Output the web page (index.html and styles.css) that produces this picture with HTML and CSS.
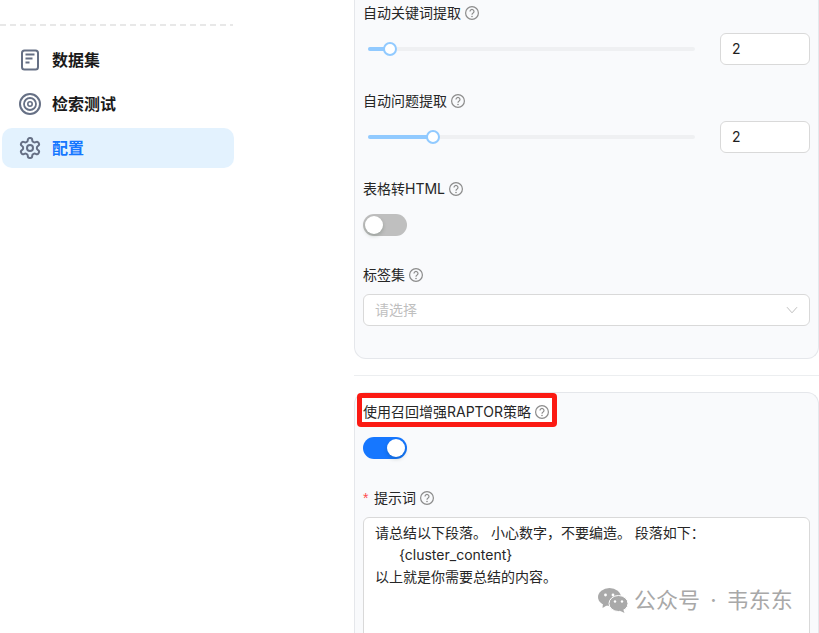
FILE: index.html
```html
<!DOCTYPE html>
<html lang="zh">
<head>
<meta charset="utf-8">
<title>配置</title>
<link rel="stylesheet" href="styles.css">
</head>
<body>
<svg class="defs" aria-hidden="true">
  <symbol id="help" viewBox="0 0 14 14">
    <circle cx="7" cy="7" r="6.4" fill="none" stroke="currentColor" stroke-width="1.2"/>
    <path d="M5 5.4a2 2 0 1 1 3.1 1.7c-.7.4-1.1.8-1.1 1.6" fill="none" stroke="currentColor" stroke-width="1.2"/>
    <circle cx="7" cy="10.5" r=".8" fill="currentColor"/>
  </symbol>
</svg>
<div class="page">
  <aside class="sidebar">
    <div class="dash"></div>
    <nav class="menu">
      <a class="item">
        <svg class="icon" viewBox="0 0 22 22" fill="none" stroke="currentColor" stroke-width="2"><rect x="3" y="1.5" width="16" height="19" rx="2.5"/><path d="M6.5 5.5h9M6.5 9.5h7M6.5 13.5h4"/></svg>
        <span>数据集</span>
      </a>
      <a class="item">
        <svg class="icon" viewBox="0 0 22 22" fill="none" stroke="currentColor"><circle cx="11" cy="11" r="10" stroke-width="2"/><circle cx="11" cy="11" r="6" stroke-width="1.8"/><circle cx="11" cy="11" r="2.2" stroke-width="1.6"/></svg>
        <span>检索测试</span>
      </a>
      <a class="item active">
        <svg class="icon" viewBox="1 1 22 22" fill="none" stroke="currentColor" stroke-width="2"><path d="M12.22 2h-.44a2 2 0 0 0-2 2v.18a2 2 0 0 1-1 1.73l-.43.25a2 2 0 0 1-2 0l-.15-.08a2 2 0 0 0-2.73.73l-.22.38a2 2 0 0 0 .73 2.73l.15.1a2 2 0 0 1 1 1.72v.51a2 2 0 0 1-1 1.74l-.15.09a2 2 0 0 0-.73 2.73l.22.38a2 2 0 0 0 2.73.73l.15-.08a2 2 0 0 1 2 0l.43.25a2 2 0 0 1 1 1.73V20a2 2 0 0 0 2 2h.44a2 2 0 0 0 2-2v-.18a2 2 0 0 1 1-1.73l.43-.25a2 2 0 0 1 2 0l.15.08a2 2 0 0 0 2.73-.73l.22-.39a2 2 0 0 0-.73-2.73l-.15-.08a2 2 0 0 1-1-1.74v-.5a2 2 0 0 1 1-1.74l.15-.09a2 2 0 0 0 .73-2.73l-.22-.38a2 2 0 0 0-2.73-.73l-.15.08a2 2 0 0 1-2 0l-.43-.25a2 2 0 0 1-1-1.73V4a2 2 0 0 0-2-2z"/><circle cx="12" cy="12" r="3"/></svg>
        <span>配置</span>
      </a>
    </nav>
  </aside>
  <main class="main">
    <section class="panel panel-top">
      <div class="field">
        <div class="label">自动关键词提取<svg class="help"><use href="#help"/></svg></div>
        <div class="slider-row">
          <div class="slider"><div class="fill fill-a"></div><div class="thumb"></div></div>
          <div class="number">2</div>
        </div>
      </div>
      <div class="field">
        <div class="label">自动问题提取<svg class="help"><use href="#help"/></svg></div>
        <div class="slider-row">
          <div class="slider"><div class="fill fill-b"></div><div class="thumb"></div></div>
          <div class="number">2</div>
        </div>
      </div>
      <div class="field field-switch">
        <div class="label label-wide">表格转HTML<svg class="help"><use href="#help"/></svg></div>
        <div class="switch"><div class="knob"></div></div>
      </div>
      <div class="field">
        <div class="label label-tight">标签集<svg class="help"><use href="#help"/></svg></div>
        <div class="select">
          <span>请选择</span>
          <svg class="chev" viewBox="0 0 12 8" fill="none" stroke="currentColor"><path d="M1 1.2l5 5.6 5-5.6"/></svg>
        </div>
      </div>
    </section>
    <hr class="rule">
    <section class="panel panel-bottom">
      <div class="label-mark">
        <div class="label">使用召回增强RAPTOR策略<svg class="help"><use href="#help"/></svg></div>
      </div>
      <div class="switch on"><div class="knob"></div></div>
      <div class="label label-prompt"><span class="req">*</span>提示词<svg class="help"><use href="#help"/></svg></div>
      <div class="textarea">
        <div>请总结以下段落。 小心数字，不要编造。 段落如下：</div>
        <div class="indent">{cluster_content}</div>
        <div>以上就是你需要总结的内容。</div>
      </div>
    </section>
  </main>
</div>
<div class="watermark">
  <svg class="wechat" viewBox="0 0 30 25">
    <ellipse cx="11.5" cy="9" rx="11.5" ry="9" fill="#a9a9a9"/>
    <path d="M5 15l-.5 5 5-3z" fill="#a9a9a9"/>
    <ellipse cx="20.5" cy="15.5" rx="9.5" ry="8" fill="#a9a9a9" stroke="#fff" stroke-width="1"/>
    <path d="M25 21l1.5 4-5-2.5z" fill="#a9a9a9"/>
    <circle cx="7.5" cy="7" r="1.4" fill="#fff"/><circle cx="15" cy="7" r="1.4" fill="#fff"/>
    <circle cx="17" cy="13.5" r="1.2" fill="#fff"/><circle cx="24" cy="13.5" r="1.2" fill="#fff"/>
  </svg>
  <span>公众号 · 韦东东</span>
</div>
</body>
</html>
```
FILE: styles.css
```css
* { box-sizing: border-box; }
html, body { margin: 0; height: 100%; }
body {
  position: relative;
  height: 633px;
  overflow: hidden;
  background: #fff;
  color: #1f2329;
  font-family: Inter, "Noto Sans CJK SC", sans-serif;
  font-size: 14px;
  line-height: 22px;
}
.defs { display: none; }
.page { display: flex; height: 633px; overflow: hidden; }

.sidebar { flex: 0 0 354px; padding-top: 24px; }
.dash {
  width: 233px;
  height: 2px;
  background: repeating-linear-gradient(90deg, #e8e8e8 0 6px, transparent 6px 10px);
}
.menu {
  display: flex;
  flex-direction: column;
  gap: 4px;
  width: 232px;
  margin: 14px 0 0 2px;
}
.item {
  display: flex;
  align-items: center;
  gap: 11px;
  height: 40px;
  padding-left: 17px;
  border-radius: 10px;
  color: #1a1a1a;
  font-size: 16px;
  font-weight: 600;
}
.item .icon { flex: 0 0 22px; width: 22px; height: 22px; color: #667085; }
.item.active { background: #e3f2fe; color: #1677ff; }

.main { flex: 1; min-width: 0; }
.panel {
  background: #f9fafc;
  border: 1px solid #e5e7eb;
  padding: 0 8px;
}
.panel-top {
  height: 359px;
  padding-top: 2px;
  border-top: 0;
  border-radius: 0 0 12px 12px;
}
.panel-bottom {
  height: 260px;
  margin-top: 16px;
  border-bottom: 0;
  border-radius: 12px 12px 0 0;
}
.rule { height: 1px; margin: 16px 0 0; border: 0; background: #eceef0; }

.field { margin-bottom: 25px; }
.field-switch { margin-bottom: 28px; }
.label {
  display: flex;
  align-items: center;
  gap: 4px;
  height: 22px;
  margin-bottom: 9px;
  white-space: nowrap;
  color: #262626;
}
.label-wide { margin-bottom: 14px; }
.label-tight { margin-bottom: 8px; }
.help { width: 14px; height: 14px; color: #8c8c8c; flex: none; }

.slider-row { display: flex; align-items: center; justify-content: space-between; }
.slider {
  display: flex;
  align-items: center;
  width: 327px;
  height: 4px;
  margin-left: 5px;
  border-radius: 2px;
  background: #eff0f2;
}
.fill { height: 4px; border-radius: 2px; background: #91caff; }
.fill-a { width: 22px; }
.fill-b { width: 65px; }
.thumb {
  flex: none;
  width: 14px;
  height: 14px;
  margin-left: -7px;
  border: 2px solid #91caff;
  border-radius: 50%;
  background: #fff;
}
.number {
  width: 90px;
  height: 32px;
  padding-left: 11px;
  border: 1px solid #d9d9d9;
  border-radius: 6px;
  background: #fff;
  line-height: 30px;
  color: #1f1f1f;
}

.switch {
  display: flex;
  align-items: center;
  width: 44px;
  height: 22px;
  padding: 2px;
  border-radius: 11px;
  background: #bfbfbf;
}
.knob { width: 18px; height: 18px; border-radius: 50%; background: #fff; box-shadow: 0 2px 4px rgba(0, 35, 11, .2); }
.switch.on { justify-content: flex-end; background: #1677ff; }

.select {
  display: flex;
  align-items: center;
  justify-content: space-between;
  height: 32px;
  padding: 0 11px;
  border: 1px solid #d9d9d9;
  border-radius: 6px;
  background: #fff;
  color: #bfbfbf;
}
.chev { width: 12px; height: 8px; color: #bfbfbf; }

.label-mark {
  width: 200px;
  height: 34px;
  margin: 0 0 10px -6px;
  padding: 8px 0 0 6px;
  background: #fff;
  box-shadow: inset 0 0 0 5px #fb1a13;
  border-radius: 4px;
}
.label-mark .label { height: 22px; margin: 0; }
.label-prompt { margin-top: 28px; margin-bottom: 8px; }
.req { width: 7px; color: #ff4d4f; font-family: "Liberation Sans", sans-serif; }

.textarea {
  height: 140px;
  padding: 4px 11px;
  border: 1px solid #d9d9d9;
  border-radius: 6px 6px 0 0;
  background: #fff;
  color: #262626;
}
.indent { padding-left: 24px; }

.watermark {
  position: absolute;
  left: 598px;
  top: 587px;
  display: flex;
  align-items: center;
  gap: 6px;
  height: 26px;
  color: #a8a8a8;
  font-size: 22px;
  word-spacing: 4px;
  white-space: nowrap;
}
.wechat { width: 30px; height: 25px; }
```
